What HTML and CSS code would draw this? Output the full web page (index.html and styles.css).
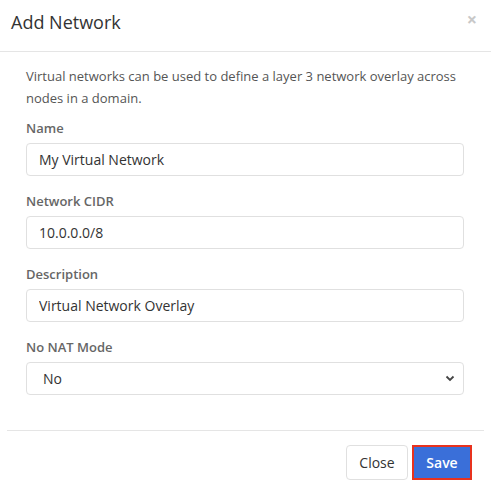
FILE: index.html
```html
<!DOCTYPE html>
<html>
<head>
<meta charset="utf-8">
<link rel="stylesheet" href="styles.css">
</head>
<body>
<div class="modal">
  <div class="modal-header">
    <h4 class="modal-title">Add Network</h4>
    <span class="close">&times;</span>
  </div>
  <div class="modal-body">
    <p class="intro">Virtual networks can be used to define a layer 3 network overlay across nodes in a domain.</p>
    <div class="field">
      <label class="label">Name</label>
      <input class="control" type="text" value="My Virtual Network">
    </div>
    <div class="field">
      <label class="label">Network CIDR</label>
      <input class="control" type="text" value="10.0.0.0/8">
    </div>
    <div class="field">
      <label class="label">Description</label>
      <input class="control" type="text" value="Virtual Network Overlay">
    </div>
    <div class="field">
      <label class="label">No NAT Mode</label>
      <div class="select">
        <span class="select-value">No</span>
        <svg class="chev" width="10" height="7" viewBox="0 0 10 7"><path d="M1.5 1.5 L5 5 L8.5 1.5" fill="none" stroke="#444" stroke-width="1.8"/></svg>
      </div>
    </div>
  </div>
  <div class="modal-footer">
    <button class="btn btn-default">Close</button>
    <button class="btn btn-primary">Save</button>
  </div>
</div>
</body>
</html>
```
FILE: styles.css
```css
* { box-sizing: border-box; }
html, body { margin: 0; padding: 0; background: #fff; }
body { font-family: "Open Sans", "Noto Sans", sans-serif; color: #555; }
.modal { width: 491px; height: 501px; display: flex; flex-direction: column; }
.modal-header {
  height: 52px;
  border-bottom: 1px solid #e5e5e5;
  display: flex;
  justify-content: space-between;
  align-items: flex-start;
  padding: 9px 14px 0 11px;
}
.modal-title { margin: 0; font-size: 18px; font-weight: 400; color: #333; line-height: 26px; }
.close { font-size: 18px; line-height: 18px; color: #c8c8c8; font-weight: 700; margin-top: 1px; }
.modal-body { padding: 13px 27px 0 26px; height: 378px; }
.intro { margin: 0 0 10px; font-size: 13px; line-height: 22px; color: #555; }
.field { display: flex; flex-direction: column; margin-bottom: 16px; }
.label { font-size: 13px; font-weight: 600; color: #666; line-height: 18px; margin-bottom: 6px; }
.control {
  height: 33px;
  border: 1px solid #e0e0e0;
  border-radius: 4px;
  padding: 0 12px;
  font-family: inherit;
  font-size: 14px;
  color: #333;
  outline: none;
}
.select {
  height: 33px;
  border: 1px solid #e0e0e0;
  border-radius: 4px;
  padding: 0 8px 0 16px;
  display: flex;
  align-items: center;
  justify-content: space-between;
  font-size: 14px;
  color: #333;
}
.modal-footer {
  margin: 0 7px;
  border-top: 1px solid #e5e5e5;
  display: flex;
  justify-content: flex-end;
  align-items: flex-start;
  gap: 4px;
  padding: 14px 12px 0 0;
  flex: 1;
}
.btn {
  height: 35px;
  font-family: inherit;
  font-size: 14px;
  border-radius: 4px;
  padding: 0 12px;
  cursor: pointer;
}
.btn-default { background: #fff; border: 1px solid #e0e0e0; color: #333; width: 62px; }
.btn-primary { background: #3a6fd9; border: 2px solid #e8321e; border-radius: 0; color: #fff; width: 60px; font-weight: 600; }
```
